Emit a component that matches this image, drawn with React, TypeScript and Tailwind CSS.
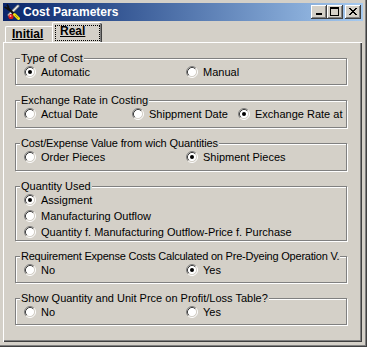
import React from 'react';

type Opt = { label: string; checked?: boolean; w?: string };

const Radio = ({ checked }: { checked?: boolean }) => (
  <svg width="12" height="12" viewBox="0 0 12 12" className="shrink-0">
    <circle cx="6" cy="6" r="4.5" fill="#fff" />
    <path d="M2.11 9.89 A5.5 5.5 0 0 1 9.89 2.11" stroke="#808080" fill="none" />
    <path d="M9.89 2.11 A5.5 5.5 0 0 1 2.11 9.89" stroke="#fff" fill="none" />
    <path d="M2.82 9.18 A4.5 4.5 0 0 1 9.18 2.82" stroke="#404040" fill="none" />
    <path d="M9.18 2.82 A4.5 4.5 0 0 1 2.82 9.18" stroke="#d4d0c8" fill="none" />
    {checked && <circle cx="6" cy="6" r="2" fill="#000" />}
  </svg>
);

const RadioRow = ({ options, className = '' }: { options: Opt[]; className?: string }) => (
  <div className={`flex items-center h-[12px] mt-[1px] pl-[8px] ${className}`}>
    {options.map((o) => (
      <div key={o.label} className={`flex items-center gap-[5px] shrink-0 ${o.w ?? ''}`}>
        <Radio checked={o.checked} />
        <span className="leading-[12px] whitespace-nowrap">{o.label}</span>
      </div>
    ))}
  </div>
);

const GroupBox = ({
  title,
  className = '',
  titleClass = '',
  children,
}: {
  title: string;
  className?: string;
  titleClass?: string;
  children: React.ReactNode;
}) => (
  <div className={`w-[332px] border border-[#808080] shadow-[inset_1px_1px_0_#fff,1px_1px_0_#fff] ${className}`}>
    <div className={`-mt-[7px] ml-[4px] w-fit bg-[#d4d0c8] px-[1px] leading-[13px] whitespace-nowrap ${titleClass}`}>
      {title}
    </div>
    {children}
  </div>
);

const CaptionButton = ({ children, className = '' }: { children: React.ReactNode; className?: string }) => (
  <div
    className={`w-[16px] h-[14px] bg-[#d4d0c8] shadow-[inset_-1px_-1px_0_#404040,inset_1px_1px_0_#fff,inset_-2px_-2px_0_#808080] ${className}`}
  >
    {children}
  </div>
);

// crossed wrench + screwdriver
const ToolsIcon = () => (
  <svg width="16" height="16" viewBox="0 0 16 16" className="shrink-0">
    <path d="M14 2 L5 11" stroke="#808080" strokeWidth="3" strokeLinecap="round" />
    <path d="M14 2 L5 11" stroke="#f0f0f0" strokeWidth="1.4" strokeLinecap="round" />
    <path d="M3.5 3.5 L12 12" stroke="#101010" strokeWidth="2.2" />
    <path d="M0.5 3 L3 4.5 L4.5 3 L3 0.5 M3 4.5 L5 6" stroke="#101010" strokeWidth="1.6" fill="none" />
    <circle cx="7" cy="12.5" r="2.6" fill="#d81818" />
    <circle cx="6.5" cy="12" r="1" fill="#f8a0a0" />
    <path d="M10.5 10.5 L14.5 14.5" stroke="#f4e010" strokeWidth="3" strokeLinecap="round" />
    <path d="M11 11 L14 14" stroke="#a09000" strokeWidth="0.8" />
  </svg>
);

export default function App() {
  return (
    <div className="w-[367px] h-[347px] overflow-hidden bg-[#d4d0c8] pl-[3px] pt-[3px] shadow-[inset_-1px_-1px_0_#404040,inset_-2px_-2px_0_#808080] font-['Liberation_Sans',Arial,sans-serif] text-[11px] text-black">
      {/* Title bar */}
      <div className="flex items-center h-[18px] w-[360px] bg-linear-to-r from-[#0a246a] to-[#a6caf0] pl-[1px] pr-[2px]">
        <ToolsIcon />
        <span className="ml-[3px] text-[12px] font-bold text-white leading-[14px]">Cost Parameters</span>
        <div className="ml-auto flex items-center">
          <CaptionButton>
            <svg width="16" height="14" viewBox="0 0 16 14" shapeRendering="crispEdges">
              <rect x="5" y="8" width="6" height="2" fill="#000" />
            </svg>
          </CaptionButton>
          <CaptionButton>
            <svg width="16" height="14" viewBox="0 0 16 14" shapeRendering="crispEdges">
              <rect x="3" y="2" width="9" height="2" fill="#000" />
              <rect x="3" y="2" width="1" height="9" fill="#000" />
              <rect x="11" y="2" width="1" height="9" fill="#000" />
              <rect x="3" y="10" width="9" height="1" fill="#000" />
            </svg>
          </CaptionButton>
          <CaptionButton className="ml-[2px]">
            <svg width="16" height="14" viewBox="0 0 16 14" shapeRendering="crispEdges" fill="#000">
              <rect x="4" y="3" width="2" height="1" />
              <rect x="10" y="3" width="2" height="1" />
              <rect x="5" y="4" width="2" height="1" />
              <rect x="9" y="4" width="2" height="1" />
              <rect x="6" y="5" width="4" height="1" />
              <rect x="7" y="6" width="2" height="1" />
              <rect x="6" y="7" width="4" height="1" />
              <rect x="5" y="8" width="2" height="1" />
              <rect x="9" y="8" width="2" height="1" />
              <rect x="4" y="9" width="2" height="1" />
              <rect x="10" y="9" width="2" height="1" />
            </svg>
          </CaptionButton>
        </div>
      </div>

      {/* Tabs */}
      <div className="flex items-end h-[21px] pl-[2px] text-[12px] font-bold">
        <div className="w-[47px] h-[16px] border-l border-t border-white rounded-tl-[2px] pl-[6px] leading-[14px]">
          <span className="underline">Initial</span>
        </div>
        <div className="w-[50px] h-[20px] border-l border-t border-white rounded-tl-[2px] rounded-tr-[2px] shadow-[inset_-1px_0_0_#404040,inset_-2px_0_0_#808080] pl-[2px] pt-[2px]">
          <div className="w-[45px] h-[16px] border border-dotted border-black pl-[4px]">
            <div className="-mt-[1px] leading-[12px] underline">Real</div>
          </div>
        </div>
      </div>

      {/* Tab panel */}
      <div className="w-[359px] h-[300px] border-l border-t border-white shadow-[inset_-1px_-1px_0_#404040,inset_-2px_-2px_0_#808080] pl-[11px] pt-[15px] flex flex-col gap-[15px]">
        <GroupBox title="Type of Cost" className="h-[27px]">
          <RadioRow
            options={[
              { label: 'Automatic', checked: true, w: 'w-[162px]' },
              { label: 'Manual' },
            ]}
          />
        </GroupBox>

        <GroupBox title="Exchange Rate in Costing" className="h-[28px]">
          <RadioRow
            options={[
              { label: 'Actual Date', w: 'w-[108px]' },
              { label: 'Shippment Date', w: 'w-[106px]' },
              { label: 'Exchange Rate at', checked: true },
            ]}
          />
        </GroupBox>

        <GroupBox title="Cost/Expense Value from wich Quantities" className="h-[28px]" titleClass="tracking-[-0.12px]">
          <RadioRow
            options={[
              { label: 'Order Pieces', w: 'w-[162px]' },
              { label: 'Shipment Pieces', checked: true },
            ]}
          />
        </GroupBox>

        <GroupBox title="Quantity Used" className="h-[55px]">
          <RadioRow options={[{ label: 'Assigment', checked: true }]} />
          <RadioRow className="mt-[4px]" options={[{ label: 'Manufacturing Outflow' }]} />
          <RadioRow
            className="mt-[4px]"
            options={[{ label: 'Quantity f. Manufacturing Outflow-Price f. Purchase' }]}
          />
        </GroupBox>

        <GroupBox
          title="Requirement Expense Costs Calculated on Pre-Dyeing Operation V."
          className="h-[27px]"
          titleClass="tracking-[-0.22px]"
        >
          <RadioRow
            options={[
              { label: 'No', w: 'w-[162px]' },
              { label: 'Yes', checked: true },
            ]}
          />
        </GroupBox>

        <GroupBox title="Show Quantity and Unit Prce on Profit/Loss Table?" className="h-[27px]">
          <RadioRow
            options={[
              { label: 'No', w: 'w-[162px]' },
              { label: 'Yes' },
            ]}
          />
        </GroupBox>
      </div>
    </div>
  );
}
